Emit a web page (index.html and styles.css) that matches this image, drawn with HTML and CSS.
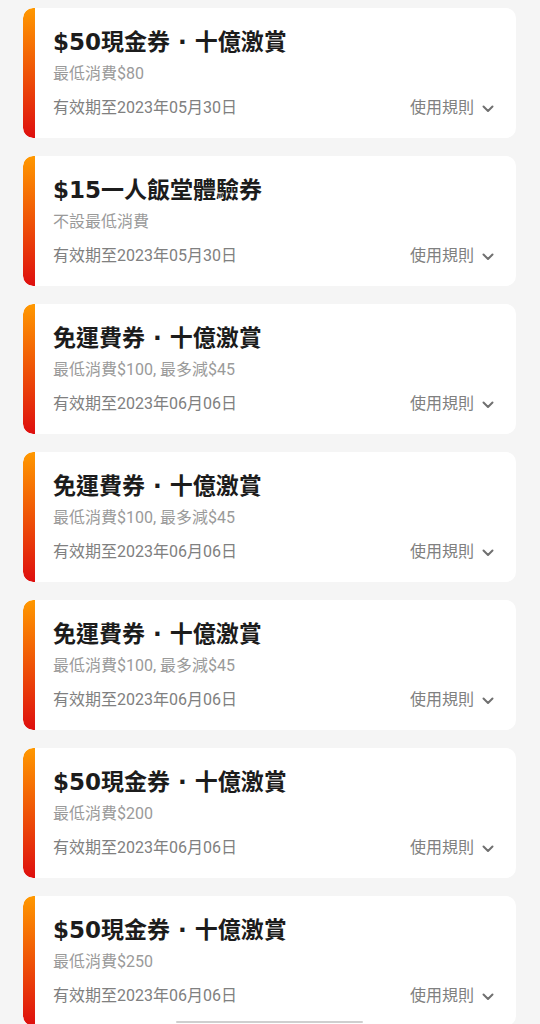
FILE: index.html
```html
<!DOCTYPE html>
<html lang="zh-Hant">
<head>
    <meta charset="UTF-8">
    <meta name="viewport" content="width=device-width, initial-scale=1.0">
    <title>我的優惠券</title>
    <link rel="stylesheet" href="styles.css">
</head>
<body>
    <main class="coupon-list">
        <div class="coupon">
            <div class="coupon-bar"></div>
            <div class="coupon-body">
                <h2 class="coupon-title">$50現金券 · 十億激賞</h2>
                <p class="coupon-min">最低消費$80</p>
                <div class="coupon-foot">
                    <span class="coupon-date">有效期至2023年05月30日</span>
                    <span class="coupon-rule">使用規則
                        <svg class="chevron" viewBox="0 0 12 8"><path d="M1.5 1.5 L6 6 L10.5 1.5"/></svg>
                    </span>
                </div>
            </div>
        </div>

        <div class="coupon">
            <div class="coupon-bar"></div>
            <div class="coupon-body">
                <h2 class="coupon-title">$15一人飯堂體驗券</h2>
                <p class="coupon-min">不設最低消費</p>
                <div class="coupon-foot">
                    <span class="coupon-date">有效期至2023年05月30日</span>
                    <span class="coupon-rule">使用規則
                        <svg class="chevron" viewBox="0 0 12 8"><path d="M1.5 1.5 L6 6 L10.5 1.5"/></svg>
                    </span>
                </div>
            </div>
        </div>

        <div class="coupon">
            <div class="coupon-bar"></div>
            <div class="coupon-body">
                <h2 class="coupon-title">免運費券 · 十億激賞</h2>
                <p class="coupon-min">最低消費$100, 最多減$45</p>
                <div class="coupon-foot">
                    <span class="coupon-date">有效期至2023年06月06日</span>
                    <span class="coupon-rule">使用規則
                        <svg class="chevron" viewBox="0 0 12 8"><path d="M1.5 1.5 L6 6 L10.5 1.5"/></svg>
                    </span>
                </div>
            </div>
        </div>

        <div class="coupon">
            <div class="coupon-bar"></div>
            <div class="coupon-body">
                <h2 class="coupon-title">免運費券 · 十億激賞</h2>
                <p class="coupon-min">最低消費$100, 最多減$45</p>
                <div class="coupon-foot">
                    <span class="coupon-date">有效期至2023年06月06日</span>
                    <span class="coupon-rule">使用規則
                        <svg class="chevron" viewBox="0 0 12 8"><path d="M1.5 1.5 L6 6 L10.5 1.5"/></svg>
                    </span>
                </div>
            </div>
        </div>

        <div class="coupon">
            <div class="coupon-bar"></div>
            <div class="coupon-body">
                <h2 class="coupon-title">免運費券 · 十億激賞</h2>
                <p class="coupon-min">最低消費$100, 最多減$45</p>
                <div class="coupon-foot">
                    <span class="coupon-date">有效期至2023年06月06日</span>
                    <span class="coupon-rule">使用規則
                        <svg class="chevron" viewBox="0 0 12 8"><path d="M1.5 1.5 L6 6 L10.5 1.5"/></svg>
                    </span>
                </div>
            </div>
        </div>

        <div class="coupon">
            <div class="coupon-bar"></div>
            <div class="coupon-body">
                <h2 class="coupon-title">$50現金券 · 十億激賞</h2>
                <p class="coupon-min">最低消費$200</p>
                <div class="coupon-foot">
                    <span class="coupon-date">有效期至2023年06月06日</span>
                    <span class="coupon-rule">使用規則
                        <svg class="chevron" viewBox="0 0 12 8"><path d="M1.5 1.5 L6 6 L10.5 1.5"/></svg>
                    </span>
                </div>
            </div>
        </div>

        <div class="coupon">
            <div class="coupon-bar"></div>
            <div class="coupon-body">
                <h2 class="coupon-title">$50現金券 · 十億激賞</h2>
                <p class="coupon-min">最低消費$250</p>
                <div class="coupon-foot">
                    <span class="coupon-date">有效期至2023年06月06日</span>
                    <span class="coupon-rule">使用規則
                        <svg class="chevron" viewBox="0 0 12 8"><path d="M1.5 1.5 L6 6 L10.5 1.5"/></svg>
                    </span>
                </div>
            </div>
        </div>
    </main>

    <div class="home-indicator"></div>
</body>
</html>
```

FILE: styles.css
```css
body {
    margin: 0;
    padding: 0;
    background-color: #f5f5f5;
    font-family: 'Roboto', 'Noto Sans CJK TC', sans-serif;
}

.coupon-list {
    display: flex;
    flex-direction: column;
    gap: 18px;
    padding: 8px 24px 0 23px;
}

.coupon {
    display: flex;
    background-color: #fff;
    border-radius: 10px;
    overflow: hidden;
    flex-shrink: 0;
}

.coupon-bar {
    width: 12px;
    flex-shrink: 0;
    background: linear-gradient(to bottom, #ff9800, #de0f0f);
    border-radius: 10px 0 0 10px;
}

.coupon-body {
    flex: 1;
    padding: 19px 22px 19px 18px;
}

.coupon-title {
    margin: 0 0 6px;
    font-family: 'DejaVu Sans', 'Noto Sans CJK TC', sans-serif;
    font-size: 23px;
    line-height: 30px;
    font-weight: 700;
    color: #1c1c1c;
}

.coupon-min {
    margin: 0 0 12px;
    font-size: 16px;
    line-height: 22px;
    color: #9a9a9a;
}

.coupon-foot {
    display: flex;
    justify-content: space-between;
    align-items: center;
    font-size: 16px;
    line-height: 22px;
    color: #808080;
}

.coupon-rule {
    display: flex;
    align-items: center;
    gap: 8px;
}

.chevron {
    width: 12px;
    height: 8px;
    margin-top: 2px;
}

.chevron path {
    fill: none;
    stroke: #707070;
    stroke-width: 2;
    stroke-linecap: round;
    stroke-linejoin: round;
}

.home-indicator {
    position: fixed;
    left: 176px;
    bottom: 1px;
    width: 187px;
    height: 2px;
    border-radius: 1px;
    background-color: #cfcfcf;
}
```
